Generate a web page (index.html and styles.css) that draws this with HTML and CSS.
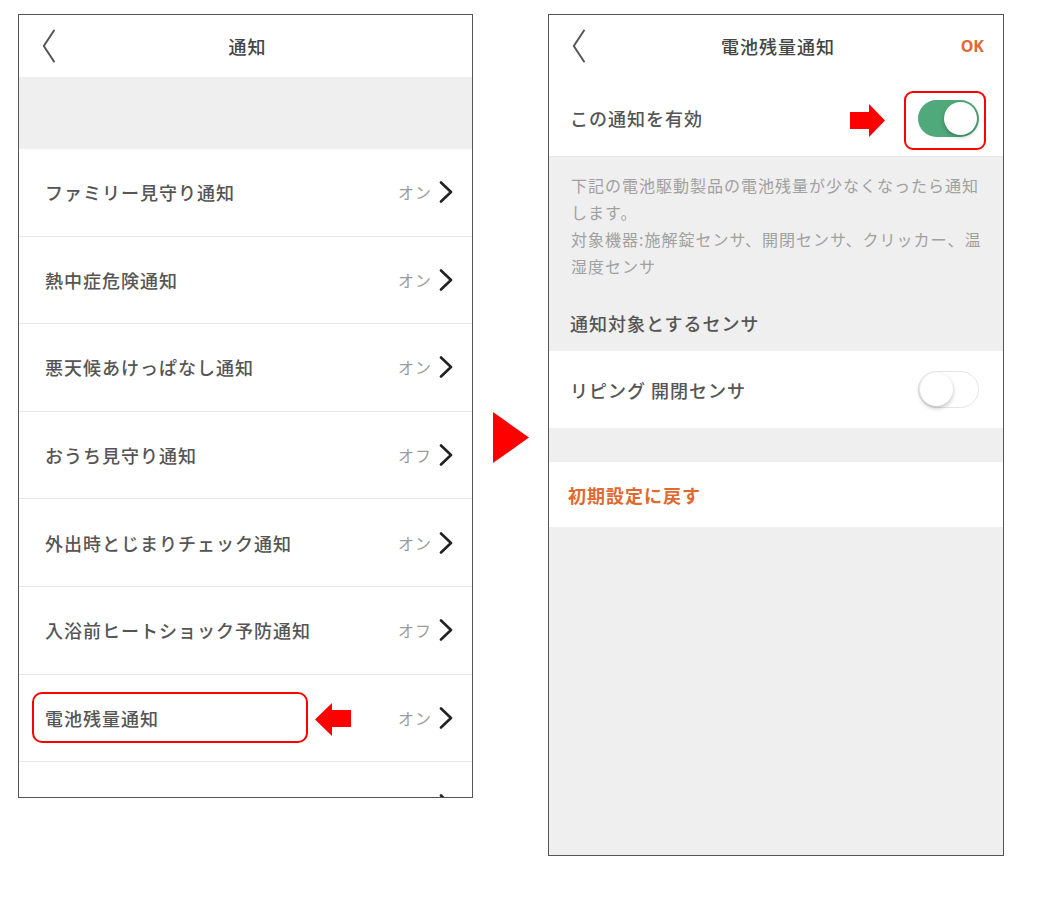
FILE: index.html
```html
<!DOCTYPE html>
<html lang="ja">
<head>
<meta charset="utf-8">
<title>通知設定</title>
<link rel="stylesheet" href="styles.css">
</head>
<body>
<div class="page">
  <section class="phone phone-left">
    <header class="nav">
      <span class="nav-back"><svg width="14" height="34" viewBox="0 0 14 34"><polyline points="12,1.5 1.8,17 12,32.5" fill="none" stroke="#555" stroke-width="2" stroke-linecap="round" stroke-linejoin="round"/></svg></span>
      <h1 class="nav-title">通知</h1>
      <span class="nav-action"></span>
    </header>
    <div class="band"></div>
    <ul class="list">
      <li class="row"><span class="row-label">ファミリー見守り通知</span><span class="row-status">オン</span><svg class="chev" width="14" height="22" viewBox="0 0 14 22"><polyline points="2,1.5 12,11 2,20.5" fill="none" stroke="#222" stroke-width="2.6" stroke-linecap="round" stroke-linejoin="round"/></svg></li>
      <li class="row"><span class="row-label">熱中症危険通知</span><span class="row-status">オン</span><svg class="chev" width="14" height="22" viewBox="0 0 14 22"><polyline points="2,1.5 12,11 2,20.5" fill="none" stroke="#222" stroke-width="2.6" stroke-linecap="round" stroke-linejoin="round"/></svg></li>
      <li class="row"><span class="row-label">悪天候あけっぱなし通知</span><span class="row-status">オン</span><svg class="chev" width="14" height="22" viewBox="0 0 14 22"><polyline points="2,1.5 12,11 2,20.5" fill="none" stroke="#222" stroke-width="2.6" stroke-linecap="round" stroke-linejoin="round"/></svg></li>
      <li class="row"><span class="row-label">おうち見守り通知</span><span class="row-status">オフ</span><svg class="chev" width="14" height="22" viewBox="0 0 14 22"><polyline points="2,1.5 12,11 2,20.5" fill="none" stroke="#222" stroke-width="2.6" stroke-linecap="round" stroke-linejoin="round"/></svg></li>
      <li class="row"><span class="row-label">外出時とじまりチェック通知</span><span class="row-status">オン</span><svg class="chev" width="14" height="22" viewBox="0 0 14 22"><polyline points="2,1.5 12,11 2,20.5" fill="none" stroke="#222" stroke-width="2.6" stroke-linecap="round" stroke-linejoin="round"/></svg></li>
      <li class="row"><span class="row-label">入浴前ヒートショック予防通知</span><span class="row-status">オフ</span><svg class="chev" width="14" height="22" viewBox="0 0 14 22"><polyline points="2,1.5 12,11 2,20.5" fill="none" stroke="#222" stroke-width="2.6" stroke-linecap="round" stroke-linejoin="round"/></svg></li>
      <li class="row row-marked"><span class="row-label">電池残量通知</span><span class="row-status">オン</span><svg class="chev" width="14" height="22" viewBox="0 0 14 22"><polyline points="2,1.5 12,11 2,20.5" fill="none" stroke="#222" stroke-width="2.6" stroke-linecap="round" stroke-linejoin="round"/></svg>
        <span class="callout callout-row"></span>
        <svg class="arrow arrow-left" width="36" height="33" viewBox="0 0 36 33"><polygon points="0,16.5 17,0 17,7 36,7 36,24 17,24 17,33" fill="#ff0000"/></svg>
      </li>
      <li class="row"><span class="row-label"></span><svg class="chev" width="14" height="22" viewBox="0 0 14 22"><polyline points="2,1.5 12,11 2,20.5" fill="none" stroke="#222" stroke-width="2.6" stroke-linecap="round" stroke-linejoin="round"/></svg></li>
    </ul>
  </section>

  <div class="divider">
    <svg class="play" width="36" height="51" viewBox="0 0 36 51"><polygon points="0,0 36,25.5 0,51" fill="#ff0000"/></svg>
  </div>

  <section class="phone phone-right">
    <header class="nav">
      <span class="nav-back"><svg width="14" height="34" viewBox="0 0 14 34"><polyline points="12,1.5 1.8,17 12,32.5" fill="none" stroke="#555" stroke-width="2" stroke-linecap="round" stroke-linejoin="round"/></svg></span>
      <h1 class="nav-title">電池残量通知</h1>
      <span class="nav-action">OK</span>
    </header>
    <div class="setting setting-main">
      <span class="setting-label">この通知を有効</span>
      <span class="toggle toggle-on"><span class="knob"></span></span>
      <span class="callout callout-toggle"></span>
      <svg class="arrow arrow-right" width="35" height="33" viewBox="0 0 35 33"><polygon points="0,8 19,8 19,0 35,16.5 19,33 19,25 0,25" fill="#ff0000"/></svg>
    </div>
    <p class="note">下記の電池駆動製品の電池残量が少なくなったら通知します。<br>対象機器:施解錠センサ、開閉センサ、クリッカー、温湿度センサ</p>
    <h2 class="section-title">通知対象とするセンサ</h2>
    <div class="setting setting-sensor">
      <span class="setting-label">リピング 開閉センサ</span>
      <span class="toggle toggle-off"><span class="knob"></span></span>
    </div>
    <div class="reset">初期設定に戻す</div>
  </section>
</div>
</body>
</html>
```

FILE: styles.css
```css
html, body {
  margin: 0;
  padding: 0;
  background: #fff;
}

body {
  width: 1058px;
  height: 906px;
  overflow: hidden;
  font-family: "Noto Sans CJK JP", "Noto Sans", sans-serif;
}

.page {
  display: flex;
  align-items: flex-start;
  padding: 14px 0 0 18px;
}

.phone {
  box-sizing: border-box;
  border: 1px solid #555;
  background: #efefef;
  overflow: hidden;
  display: flex;
  flex-direction: column;
}

.phone-left {
  width: 455px;
  height: 784px;
}

.phone-right {
  width: 456px;
  height: 842px;
}

.nav {
  flex: none;
  height: 62px;
  background: #fff;
  display: grid;
  grid-template-columns: 1fr auto 1fr;
  align-items: center;
  padding: 0 19px 0 23px;
}

.nav-back {
  display: flex;
  align-items: center;
}

.nav-title {
  margin: 0;
  font-size: 18px;
  font-weight: 500;
  color: #444;
  letter-spacing: 1px;
}

.nav-action {
  justify-self: end;
  font-family: "Noto Sans", sans-serif;
  font-size: 16px;
  font-weight: 700;
  color: #e0692f;
}

.band {
  flex: none;
  height: 72px;
}

.list {
  list-style: none;
  margin: 0;
  padding: 0;
  background: #fff;
}

.row {
  position: relative;
  box-sizing: border-box;
  height: 87.6px;
  border-bottom: 1px solid #e8e8e8;
  display: flex;
  align-items: center;
  padding: 0 19px 0 26px;
}

.row-label {
  flex: 1;
  font-size: 18px;
  font-weight: 500;
  color: #555;
  letter-spacing: 1px;
}

.row-status {
  font-size: 16px;
  color: #9c9c9c;
  letter-spacing: 1px;
  margin-right: 7px;
}

.chev {
  display: block;
  flex: none;
}

.callout {
  position: absolute;
  box-sizing: border-box;
  border: 2px solid #ff0000;
  border-radius: 10px;
  pointer-events: none;
}

.callout-row {
  left: 13px;
  top: 17px;
  width: 276px;
  height: 51px;
}

.arrow {
  position: absolute;
  display: block;
}

.arrow-left {
  left: 296px;
  top: 28px;
}

.divider {
  flex: none;
  width: 75px;
  display: flex;
  justify-content: center;
  padding-top: 398px;
}

.play {
  display: block;
}

.setting {
  position: relative;
  flex: none;
  background: #fff;
  display: flex;
  align-items: center;
  justify-content: space-between;
  padding: 0 24px 0 21px;
}

.setting-main {
  height: 80px;
  box-sizing: border-box;
  border-bottom: 1px solid #e9e9e9;
  padding-top: 3px;
}

.setting-sensor {
  height: 77px;
}

.setting-label {
  font-size: 18px;
  font-weight: 500;
  color: #555;
  letter-spacing: 1px;
}

.toggle {
  position: relative;
  box-sizing: border-box;
  width: 61px;
  height: 37px;
  border-radius: 19px;
}

.toggle-on {
  background: #4fa97a;
}

.toggle-off {
  background: #fff;
  border: 1.5px solid #e4e4e4;
}

.knob {
  position: absolute;
  width: 33px;
  height: 33px;
  border-radius: 50%;
  background: #fff;
  box-shadow: 0 2px 4px rgba(0, 0, 0, 0.25);
}

.toggle-on .knob {
  right: 2px;
  top: 2px;
}

.toggle-off .knob {
  left: 0.5px;
  top: 0.5px;
}

.callout-toggle {
  left: 355px;
  top: 14px;
  width: 82px;
  height: 59px;
  border-radius: 9px;
}

.arrow-right {
  left: 301px;
  top: 27px;
}

.note {
  flex: none;
  margin: 0;
  box-sizing: border-box;
  height: 138px;
  padding: 15px 14px 0 22px;
  font-size: 16px;
  line-height: 27px;
  letter-spacing: 1px;
  color: #a0a0a0;
}

.section-title {
  flex: none;
  margin: 0;
  height: 56px;
  display: flex;
  align-items: center;
  padding-left: 21px;
  font-size: 18px;
  font-weight: 500;
  color: #555;
  letter-spacing: 1px;
}

.reset {
  flex: none;
  margin-top: 34px;
  height: 65px;
  background: #fff;
  display: flex;
  align-items: center;
  padding-left: 19px;
  font-size: 18px;
  font-weight: 700;
  color: #e0692f;
  letter-spacing: 1px;
}
```
